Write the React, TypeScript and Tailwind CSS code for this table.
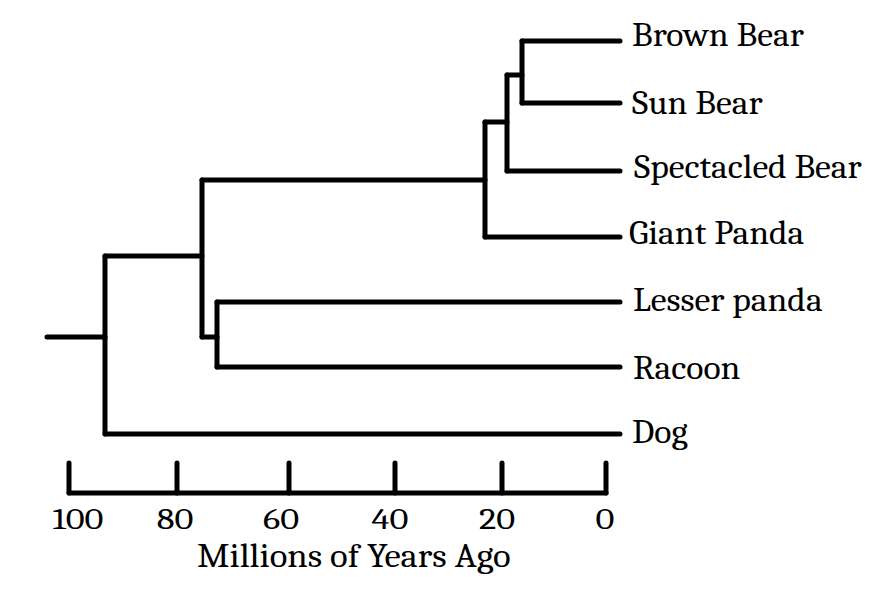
import React from "react";

// tree branches as line segments [x1, y1, x2, y2]
const branches: [number, number, number, number][] = [
  [47, 337, 105, 337], // root stub
  [105, 256, 105, 434],
  [105, 434, 620, 434], // dog
  [105, 256, 202, 256],
  [202, 180, 202, 337],
  [202, 337, 217, 337],
  [217, 302, 217, 367],
  [217, 302, 620, 302], // lesser panda
  [217, 367, 620, 367], // racoon
  [202, 180, 485, 180],
  [485, 122, 485, 237],
  [485, 237, 620, 237], // giant panda
  [485, 122, 507, 122],
  [507, 75, 507, 171],
  [507, 171, 620, 171], // spectacled bear
  [507, 75, 522, 75],
  [522, 41, 522, 103],
  [522, 41, 620, 41], // brown bear
  [522, 103, 620, 103], // sun bear
];

const species = [
  { name: "Brown Bear", pos: "left-[632px] top-[19px]" },
  { name: "Sun Bear", pos: "left-[632px] top-[87px]" },
  { name: "Spectacled Bear", pos: "left-[634px] top-[151px]" },
  { name: "Giant Panda", pos: "left-[629px] top-[217px]" },
  { name: "Lesser panda", pos: "left-[633px] top-[284px]" },
  { name: "Racoon", pos: "left-[633px] top-[352px]" },
  { name: "Dog", pos: "left-[632px] top-[416px]" },
];

const ticks = [
  { label: "100", x: 69, pos: "left-[48px]" },
  { label: "80", x: 177, pos: "left-[145px]" },
  { label: "60", x: 289, pos: "left-[251px]" },
  { label: "40", x: 395, pos: "left-[360px]" },
  { label: "20", x: 502, pos: "left-[467px]" },
  { label: "0", x: 606, pos: "left-[575px]" },
];

const App: React.FC = () => {
  return (
    <div className="min-h-screen w-full bg-white flex">
      <div className="relative w-[884px] h-[589px] font-serif text-black">
        <svg width={884} height={589} viewBox="0 0 884 589" className="block">
          {/* Tree */}
          <g stroke="#000" strokeWidth={5} strokeLinecap="round">
            {branches.map(([x1, y1, x2, y2], i) => (
              <line key={i} x1={x1} y1={y1} x2={x2} y2={y2} />
            ))}
          </g>
          {/* Time axis */}
          <g stroke="#000" strokeWidth={5} strokeLinecap="round">
            <line x1={69} y1={493} x2={606} y2={493} />
            {ticks.map((t) => (
              <line key={t.label} x1={t.x} y1={463} x2={t.x} y2={493} />
            ))}
          </g>
        </svg>

        {/* Species labels */}
        {species.map((s) => (
          <div
            key={s.name}
            className={`absolute ${s.pos} text-[33px] leading-none whitespace-nowrap origin-left scale-x-[1.08]`}
          >
            {s.name}
          </div>
        ))}

        {/* Axis labels */}
        {ticks.map((t) => (
          <div
            key={t.label}
            className={`absolute ${t.pos} top-[505px] w-[60px] text-center text-[29px] leading-none origin-center scale-x-[1.26]`}
          >
            {t.label}
          </div>
        ))}
        <div className="absolute left-[197px] top-[540px] text-[33px] leading-none whitespace-nowrap origin-left scale-x-[1.11]">
          Millions of Years Ago
        </div>
      </div>
    </div>
  );
};

export default App;
